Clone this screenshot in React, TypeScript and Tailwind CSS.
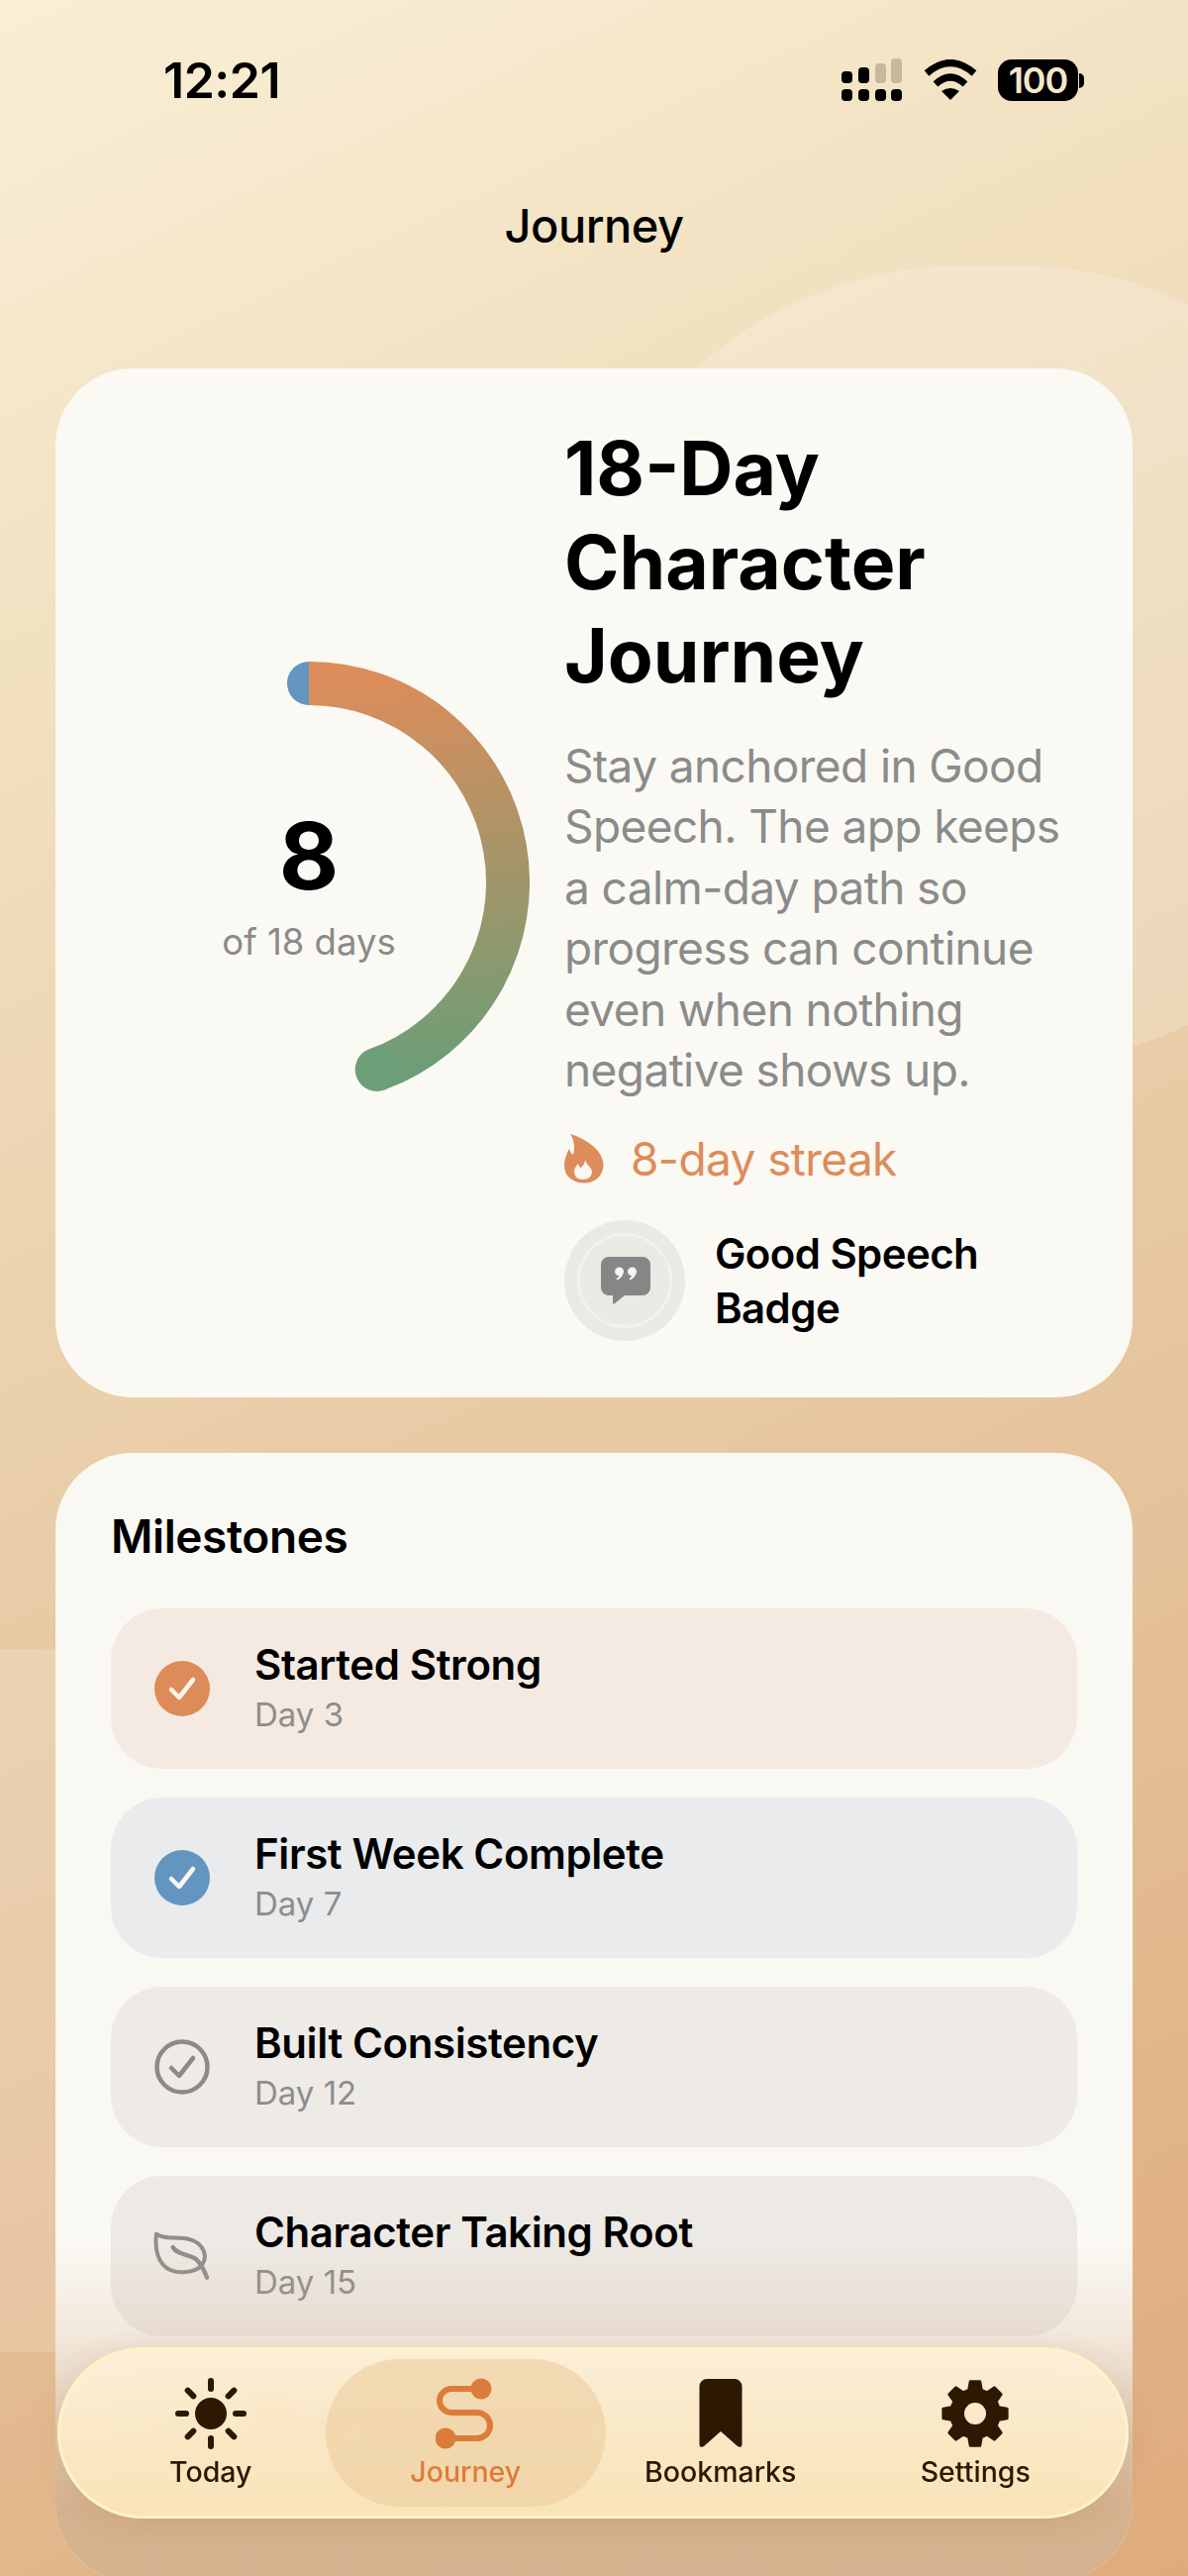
const FONT = "font-['Inter','Liberation_Sans',sans-serif]";

function gearPath() {
  const pts: string[] = [];
  for (let i = 0; i < 8; i++) {
    const a = (i * 45 * Math.PI) / 180 - Math.PI / 2;
    const deg = Math.PI / 180;
    const p = (r: number, t: number) =>
      `${(35 + r * Math.cos(t)).toFixed(2)} ${(35 + r * Math.sin(t)).toFixed(2)}`;
    pts.push(p(24.5, a - 15 * deg), p(32.5, a - 8.5 * deg), p(32.5, a + 8.5 * deg), p(24.5, a + 15 * deg));
  }
  return `M${pts.join("L")}Z M35 22.5a12.5 12.5 0 1 0 0 25a12.5 12.5 0 1 0 0-25Z`;
}

function SignalIcon() {
  return (
    <svg width="62" height="44" viewBox="0 0 62 44">
      <rect x="0" y="13" width="11" height="12" rx="4" fill="#000" />
      <rect x="17" y="9" width="11" height="16" rx="4" fill="#000" />
      <rect x="34" y="5" width="11" height="20" rx="4" fill="#c9b99c" />
      <rect x="50" y="0" width="11" height="25" rx="4" fill="#c9b99c" />
      <rect x="0" y="31" width="11" height="12" rx="4" fill="#000" />
      <rect x="17" y="31" width="11" height="12" rx="4" fill="#000" />
      <rect x="34" y="31" width="11" height="12" rx="4" fill="#000" />
      <rect x="50" y="31" width="11" height="12" rx="4" fill="#000" />
    </svg>
  );
}

function WifiIcon() {
  return (
    <svg width="54" height="42" viewBox="0 0 54 42" fill="none">
      <path d="M3 14Q27 -7 51 14" stroke="#000" strokeWidth="7" />
      <path d="M12 25Q27 11 42 25" stroke="#000" strokeWidth="7" />
      <path d="M18 32Q27 26 36 32L27 41Z" fill="#000" />
    </svg>
  );
}

function Battery() {
  return (
    <div className="flex items-center gap-[1px]">
      <div className="w-[81px] h-[42px] rounded-[14px] bg-black flex items-center justify-center text-[36px] leading-none font-semibold text-[#f6e7c9] tracking-[-1px]">
        100
      </div>
      <div className="w-[5px] h-[15px] rounded-r-full bg-black" />
    </div>
  );
}

function Ring() {
  return (
    <div className="relative w-[446px] h-[446px] shrink-0">
      <svg width="446" height="446" viewBox="0 0 446 446" fill="none">
        <defs>
          <linearGradient id="ring" gradientUnits="userSpaceOnUse" x1="240" y1="20" x2="280" y2="430">
            <stop offset="0" stopColor="#dc8d5b" />
            <stop offset="1" stopColor="#6a9e77" />
          </linearGradient>
        </defs>
        <circle cx="223" cy="22" r="22" fill="#6295c0" />
        <path
          d="M223 22A201 201 0 0 1 291.7 411.9"
          stroke="url(#ring)"
          strokeWidth="44"
        />
        <circle cx="291.7" cy="411.9" r="22" fill="#6c9f77" />
      </svg>
      <div className="absolute left-0 right-0 top-[140px] flex flex-col items-center">
        <div className="text-[93px] leading-[112px] font-bold text-black">8</div>
        <div className="mt-[9px] text-[36.500px] leading-[44px] text-[#8a8a8a]">of 18 days</div>
      </div>
    </div>
  );
}

function FlameIcon() {
  return (
    <svg width="40" height="51" viewBox="0 0 40 51" className="shrink-0">
      <path
        d="M6 1C14 3 39 14 39.500 32C39.500 43 31 50.500 20 50.500C8 50.500 0 43 0 33C0 26 3 20 5 16C6 19 7 21 9 22C11 15 10 7 6 1Z"
        fill="#dd8c5a"
      />
      <path
        d="M21 27C22 32 28 35 28 39C28 44 24 47 19 47C14 47 10 44 10 39C10 36 12 33 14 31C14.500 33 15.500 34.500 17 35C19 33 21 30 21 27Z"
        fill="#fbf8f3"
      />
    </svg>
  );
}

function BadgeIcon() {
  return (
    <div className="w-[122px] h-[122px] rounded-full bg-[#ebe9e4] flex items-center justify-center shrink-0">
      <div className="w-[96px] h-[96px] rounded-full border-[3px] border-[#f3f1ec] flex items-center justify-center pl-[1px]">
        <svg width="50" height="48" viewBox="0 0 50 48">
          <path
            d="M8 0H42A8 8 0 0 1 50 8V31A8 8 0 0 1 42 39H24L14 47C13 48 12 47.500 12 46V39H8A8 8 0 0 1 0 31V8A8 8 0 0 1 8 0Z"
            fill="#868686"
          />
          <path d="M14 15a4.500 4.500 0 1 1 8.500 2c-1 3-3 5-6 6.500l-1-1.500c1.500-1 2.500-2 3-3a4.500 4.500 0 0 1-4.500-4Z" fill="#f7f5f0" />
          <path d="M27 15a4.500 4.500 0 1 1 8.500 2c-1 3-3 5-6 6.500l-1-1.500c1.500-1 2.500-2 3-3a4.500 4.500 0 0 1-4.500-4Z" fill="#f7f5f0" />
        </svg>
      </div>
    </div>
  );
}

function CheckFilled({ color }: { color: string }) {
  return (
    <svg width="56" height="56" viewBox="0 0 56 56" fill="none">
      <circle cx="28" cy="28" r="28" fill={color} />
      <path d="M17 29L25 37L39 19" stroke="#fdf6ee" strokeWidth="4.500" strokeLinecap="round" strokeLinejoin="round" />
    </svg>
  );
}

function CheckOutline() {
  return (
    <svg width="56" height="56" viewBox="0 0 56 56" fill="none">
      <circle cx="28" cy="28" r="25.500" stroke="#8c8a88" strokeWidth="4.500" />
      <path d="M17 29L25 37L39 19" stroke="#8c8a88" strokeWidth="4.500" strokeLinecap="round" strokeLinejoin="round" />
    </svg>
  );
}

function LeafIcon() {
  return (
    <svg width="58" height="52" viewBox="0 0 58 52" fill="none" className="-ml-[1px]">
      <path
        d="M3 3C10 10 25 5 38 9C52 13 56 27 50 35C42 44 20 46 10 35C2 26 2 12 3 3Z"
        stroke="#8f8d8b"
        strokeWidth="4"
        strokeLinejoin="round"
      />
      <path d="M20 17C24 24 34 24 42 28C47 31 51 38 55 48" stroke="#8f8d8b" strokeWidth="4.500" strokeLinecap="round" />
    </svg>
  );
}

function SunIcon() {
  const rays = [0, 45, 90, 135, 180, 225, 270, 315];
  return (
    <svg width="72" height="72" viewBox="0 0 72 72">
      <circle cx="36" cy="36" r="16" fill="#2d1803" />
      {rays.map((r) => (
        <line
          key={r}
          x1="36"
          y1="11"
          x2="36"
          y2="3"
          stroke="#2d1803"
          strokeWidth="6"
          strokeLinecap="round"
          transform={`rotate(${r} 36 36)`}
        />
      ))}
    </svg>
  );
}

function PathIcon() {
  return (
    <svg width="60" height="72" viewBox="0 0 60 72" fill="none">
      <path d="M46 11H16a12 12 0 0 0 0 24H42a13 13 0 0 1 0 26H10" stroke="#dc7c3a" strokeWidth="6" />
      <circle cx="46" cy="11" r="10.500" fill="#dc7c3a" />
      <circle cx="10" cy="61" r="10.500" fill="#dc7c3a" />
    </svg>
  );
}

function BookmarkIcon() {
  return (
    <svg width="44" height="72" viewBox="0 0 44 72">
      <path
        d="M8 1H36A7.500 7.500 0 0 1 43.500 8.500V67C43.500 70 41 70.500 39 69L22 54L5 69C3 70.500 0.500 70 0.500 67V8.500A7.500 7.500 0 0 1 8 1Z"
        fill="#2d1803"
      />
    </svg>
  );
}

function GearIcon() {
  return (
    <svg width="70" height="72" viewBox="0 0 70 70">
      <path d={gearPath()} fill="#2d1803" stroke="#2d1803" strokeWidth="3" strokeLinejoin="round" fillRule="evenodd" />
    </svg>
  );
}

const MILESTONES = [
  { title: "Started Strong", day: "Day 3", bg: "bg-[#f5eae2]", icon: <CheckFilled color="#dd8b58" /> },
  { title: "First Week Complete", day: "Day 7", bg: "bg-[#e9ebec]", icon: <CheckFilled color="#6295c0" /> },
  { title: "Built Consistency", day: "Day 12", bg: "bg-[#eeebe6]", icon: <CheckOutline /> },
  { title: "Character Taking Root", day: "Day 15", bg: "bg-[#ede9e4]", icon: <LeafIcon /> },
  { title: "Near Completion", day: "Day 18", bg: "bg-[#ede9e4]", icon: <CheckOutline />, hidden: true },
];

const NAV = [
  { label: "Today", icon: <SunIcon /> },
  { label: "Journey", icon: <PathIcon />, active: true },
  { label: "Bookmarks", icon: <BookmarkIcon /> },
  { label: "Settings", icon: <GearIcon /> },
];

export default function App() {
  return (
    <div
      className={`relative w-[1200px] h-[2601px] overflow-hidden bg-[linear-gradient(155deg,#f9efd6_0%,#f1dfbe_24%,#e7caa4_54%,#dfab7c_100%)] ${FONT}`}
    >
      {/* background blobs */}
      <div className="absolute left-[570px] top-[268px] w-[860px] h-[806px] rounded-full bg-white/20" />
      <div className="absolute left-[-350px] top-[1665px] w-[1000px] h-[710px] rounded-full bg-white/15" />

      <div className="relative">
        {/* status bar + title */}
        <div className="h-[372px] flex flex-col">
          <div className="mt-[59px] h-[44px] flex items-center justify-between pl-[165px] pr-[105px]">
            <div className="text-[50px] leading-none font-semibold text-black tracking-[-0.5px]">12:21</div>
            <div className="flex items-center gap-[21px]">
              <SignalIcon />
              <WifiIcon />
              <Battery />
            </div>
          </div>
          <div className="mt-[97px] text-center text-[47px] leading-[56px] font-medium text-black tracking-[-0.5px]">
            Journey
          </div>
        </div>

        {/* journey card */}
        <div className="mx-[56px] rounded-[78px] bg-[#fbf9f4] flex items-center pl-[33px] pr-[40px] pt-[56px] pb-[57px]">
          <Ring />
          <div className="ml-[35px] flex-1 min-w-0">
            <h1 className="-mt-[2px] text-[75px] leading-[94.500px] font-bold text-black">18-Day Character Journey</h1>
            <p className="mt-[33px] text-[46px] leading-[61.500px] text-[#8b8b8b] tracking-[-0.6px]">
              Stay anchored in Good Speech. The app keeps a calm-day path so progress can continue even when nothing negative shows up.
            </p>
            <div className="mt-[28px] flex items-center gap-[27px]">
              <FlameIcon />
              <span className="text-[46px] leading-[60px] text-[#dd8c5a] tracking-[-0.6px]">8-day streak</span>
            </div>
            <div className="mt-[32px] flex items-center gap-[30px]">
              <BadgeIcon />
              <div className="text-[42px] leading-[55px] font-semibold text-black tracking-[-0.6px]">
                Good Speech
                <br />
                Badge
              </div>
            </div>
          </div>
        </div>

        {/* milestones */}
        <div className="relative mt-[56px] mx-[56px] rounded-[78px] bg-[#faf8f3] overflow-hidden px-[56px] pt-[52px] pb-[56px]">
          <h2 className="text-[46px] leading-[64px] font-semibold text-black tracking-[-0.4px]">Milestones</h2>
          <div className="mt-[41px] flex flex-col gap-[29px]">
            {MILESTONES.map((m) => (
              <div key={m.title} className={`h-[162px] rounded-[52px] flex items-center pl-[44px] ${m.bg}`}>
                <div className="w-[56px] flex justify-center shrink-0">{m.icon}</div>
                <div className="ml-[45px]">
                  <div className={`text-[42px] leading-[52px] font-semibold tracking-[-0.4px] ${m.hidden ? "text-[#c2492a]" : "text-black"}`}>
                    {m.title}
                  </div>
                  <div className="text-[33px] leading-[48px] text-[#8d8d8d]">{m.day}</div>
                </div>
              </div>
            ))}
          </div>
          <div className="absolute inset-x-0 bottom-0 h-[340px] bg-[linear-gradient(to_bottom,rgba(214,176,138,0)_0%,rgba(214,176,138,0.22)_26%,rgba(212,175,138,0.95)_78%)]" />
        </div>
      </div>

      {/* tab bar */}
      <div className="absolute left-[58px] top-[2370px] w-[1082px] h-[173px] rounded-full border-[3px] border-[#fff3c6] bg-[linear-gradient(to_bottom,rgba(254,241,216,0.87),rgba(251,231,186,0.94))] backdrop-blur-[6px] shadow-[0_8px_30px_rgba(130,85,40,0.12)] px-[23px] py-[9px] grid grid-cols-4">
        {NAV.map((n) => (
          <div
            key={n.label}
            className={`flex flex-col items-center rounded-full pt-[19px] ${n.active ? "-mx-[13px] bg-[#eccd9e]/60" : ""}`}
          >
            <div className="h-[72px] flex items-center justify-center">{n.icon}</div>
            <div
              className={`mt-[5px] text-[28.500px] leading-[36px] font-medium ${n.active ? "text-[#dc7c3a]" : "text-[#2d1803]"}`}
            >
              {n.label}
            </div>
          </div>
        ))}
      </div>
    </div>
  );
}
